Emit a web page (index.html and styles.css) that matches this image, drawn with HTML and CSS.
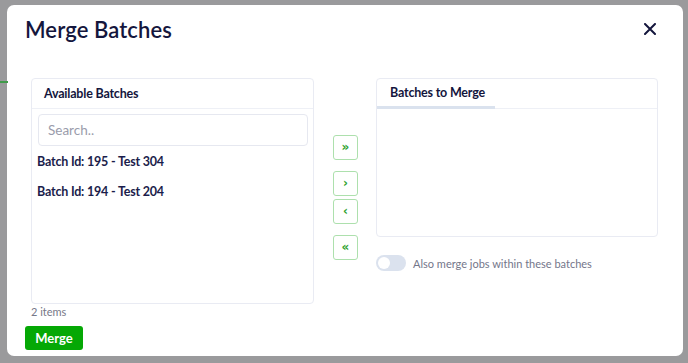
FILE: index.html
```html
<!DOCTYPE html>
<html lang="en">
<head>
    <meta charset="UTF-8">
    <title>Merge Batches</title>
    <link rel="stylesheet" href="styles.css">
</head>
<body>
    <div class="page-line"></div>

    <div class="modal">
        <div class="modal-header">
            <h1>Merge Batches</h1>
            <button class="close-btn" aria-label="Close">
                <svg width="12" height="12" viewBox="0 0 12 12">
                    <path d="M1 1 L11 11 M11 1 L1 11" stroke="#14163d" stroke-width="2" stroke-linecap="round"/>
                </svg>
            </button>
        </div>

        <div class="modal-body">
            <div class="left-col">
                <div class="panel available">
                    <div class="panel-header">Available Batches</div>
                    <input class="search" type="text" placeholder="Search..">
                    <div class="batch-item">Batch Id: 195 - Test 304</div>
                    <div class="batch-item">Batch Id: 194 - Test 204</div>
                </div>
                <div class="item-count">2 items</div>
            </div>

            <div class="transfer-buttons">
                <button class="move-btn">&raquo;</button>
                <div class="pair">
                    <button class="move-btn">&rsaquo;</button>
                    <button class="move-btn">&lsaquo;</button>
                </div>
                <button class="move-btn">&laquo;</button>
            </div>

            <div class="right-col">
                <div class="panel to-merge">
                    <div class="panel-header tabs">
                        <span class="tab active">Batches to Merge</span>
                    </div>
                </div>
                <label class="toggle-row">
                    <span class="toggle"><span class="knob"></span></span>
                    Also merge jobs within these batches
                </label>
            </div>
        </div>

        <div class="modal-footer">
            <button class="merge-btn">Merge</button>
        </div>
    </div>
</body>
</html>
```

FILE: styles.css
```css
body {
    margin: 0;
    padding: 5px 5px 7px 7px;
    background: #9a9a9c;
    font-family: 'Lato', 'Noto Sans', sans-serif;
    color: #14163d;
    height: 363px;
    box-sizing: border-box;
    overflow: hidden;
    position: relative;
}

/* page behind the backdrop */
.page-line {
    position: absolute;
    left: 0;
    top: 81px;
    width: 8px;
    height: 2px;
    background: #3f9a4a;
}

.modal {
    width: 676px;
    height: 351px;
    background: #fff;
    border-radius: 7px;
    box-sizing: border-box;
    display: flex;
    flex-direction: column;
}

.modal-header {
    display: flex;
    justify-content: space-between;
    align-items: center;
    padding: 7px 27px 0 18px;
    height: 34px;
}

.modal-header h1 {
    font-size: 22px;
    font-weight: 600;
    margin: 0;
    letter-spacing: 0.1px;
}

.close-btn {
    border: none;
    background: none;
    padding: 0;
    display: flex;
    cursor: pointer;
}

.modal-body {
    display: flex;
    padding: 32px 25px 0 24px;
}

.left-col {
    width: 283px;
}

.panel {
    border: 1px solid #e9ebf3;
    border-radius: 4px;
    box-sizing: border-box;
}

.panel.available {
    height: 226px;
}

.panel-header {
    height: 29px;
    display: flex;
    align-items: center;
    padding-left: 12px;
    font-size: 12.5px;
    font-weight: 700;
    letter-spacing: -0.2px;
    border-bottom: 1px solid #eef0f6;
    white-space: nowrap;
}

.search {
    display: block;
    margin: 5px 6px 1px 6px;
    width: 270px;
    height: 32px;
    box-sizing: border-box;
    border: 1px solid #e6e8f0;
    border-radius: 4px;
    padding: 0 9px;
    font-family: inherit;
    font-size: 13.5px;
    color: #14163d;
    outline: none;
}

.search::placeholder {
    color: #9a9cab;
}

.batch-item {
    height: 30px;
    line-height: 30px;
    padding-left: 5px;
    font-size: 12.5px;
    font-weight: 700;
    letter-spacing: -0.2px;
    color: #1b1d4b;
}

.item-count {
    margin-top: 1px;
    font-size: 11px;
    color: #767888;
    line-height: 14px;
}

.transfer-buttons {
    display: flex;
    flex-direction: column;
    gap: 11px;
    margin: 57px 18px 0 19px;
    width: 25px;
}

.pair {
    display: flex;
    flex-direction: column;
    gap: 3px;
}

.move-btn {
    width: 25px;
    height: 25px;
    padding: 0 0 2px 0;
    border: 1px solid #ade0ad;
    border-radius: 3px;
    background: #fff;
    color: #2fa32f;
    font-family: 'DejaVu Sans', sans-serif;
    font-size: 12px;
    font-weight: 700;
    line-height: 1;
    cursor: pointer;
}

.right-col {
    width: 282px;
}

.panel.to-merge {
    height: 159px;
}

.panel-header.tabs {
    padding-left: 0;
    align-items: stretch;
}

.tab {
    display: flex;
    align-items: center;
    padding: 0 13px;
    width: 118px;
    box-sizing: border-box;
    border-bottom: 3px solid #dae2ee;
    margin-bottom: -1px;
}

.toggle-row {
    display: flex;
    align-items: center;
    gap: 7px;
    margin-top: 18px;
    font-size: 11px;
    color: #74768a;
}

.toggle {
    width: 30px;
    height: 16px;
    border-radius: 8px;
    background: #dbe2ee;
    display: flex;
    align-items: center;
    padding-left: 2px;
    box-sizing: border-box;
}

.knob {
    width: 12px;
    height: 12px;
    border-radius: 50%;
    background: #fff;
}

.modal-footer {
    padding: 7px 0 0 18px;
}

.merge-btn {
    width: 58px;
    height: 24px;
    border: none;
    border-radius: 3px;
    background: #05a805;
    color: #fff;
    font-family: inherit;
    font-size: 13px;
    font-weight: 700;
    cursor: pointer;
}
```
